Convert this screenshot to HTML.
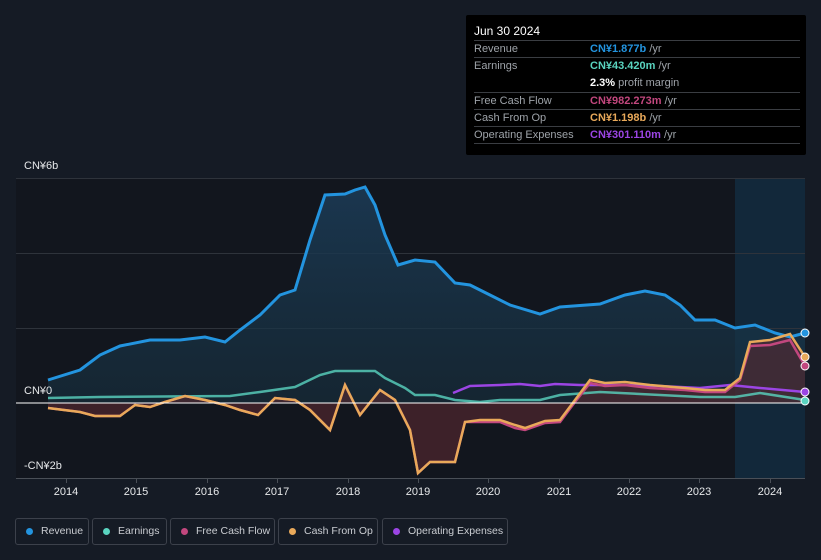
<!DOCTYPE html>
<html><head><meta charset="utf-8"><style>
html,body{margin:0;width:821px;height:560px;overflow:hidden}
body{background:#151b25;font-family:"Liberation Sans","Noto Sans CJK SC",sans-serif;position:relative;color:#fff}
.tt{position:absolute;left:466px;top:15px;width:340px;height:140px;background:#000;border-radius:2px;font-size:11px}
.tt .h{position:absolute;left:8px;top:9px;font-size:12px;color:#fff}
.row{position:absolute;left:8px;width:326px;border-top:1px solid #3a3d42;height:17px;line-height:17px}
.row .l{position:absolute;left:0;color:#9ea3a9;white-space:nowrap}
.row .v{position:absolute;left:116px;color:#9ea3a9;white-space:nowrap}
.lab{position:absolute;font-size:11px;color:#e6e8ea}
.leg{position:absolute;top:518px;height:27px;border:1px solid #3c414b;border-radius:3px;font-size:10.5px;color:#c9ccd1;line-height:25px;box-sizing:border-box;white-space:nowrap;overflow:hidden}
.leg i{position:absolute;left:10px;top:9px;width:7px;height:7px;border-radius:50%}
.leg span{position:absolute;left:25px}
</style></head><body>
<svg width="821" height="560" style="position:absolute;left:0;top:0">
<defs>
<linearGradient id="rg" x1="0" y1="0" x2="0" y2="1"><stop offset="0" stop-color="#1b3a55" stop-opacity=".9"/><stop offset="1" stop-color="#17303f" stop-opacity=".6"/></linearGradient>
</defs>
<rect x="16" y="178" width="789" height="300" fill="#12161e"/>
<rect x="735" y="178" width="70" height="300" fill="#12283a"/>
<g stroke="#2e333b" stroke-width="1"><line x1="16" y1="178.5" x2="805" y2="178.5"/><line x1="16" y1="253.5" x2="805" y2="253.5"/><line x1="16" y1="328.5" x2="805" y2="328.5"/><line x1="16" y1="478.5" x2="805" y2="478.5" stroke="#4a4f57"/></g>
<g stroke="#4a4f57"><line x1="66.5" y1="478" x2="66.5" y2="483"/><line x1="136.5" y1="478" x2="136.5" y2="483"/><line x1="207.5" y1="478" x2="207.5" y2="483"/><line x1="277.5" y1="478" x2="277.5" y2="483"/><line x1="348.5" y1="478" x2="348.5" y2="483"/><line x1="418.5" y1="478" x2="418.5" y2="483"/><line x1="488.5" y1="478" x2="488.5" y2="483"/><line x1="559.5" y1="478" x2="559.5" y2="483"/><line x1="629.5" y1="478" x2="629.5" y2="483"/><line x1="699.5" y1="478" x2="699.5" y2="483"/><line x1="770.5" y1="478" x2="770.5" y2="483"/></g>
<path d="M48,380 L80,370 100,355 120,346 150,340 180,340 205,337 225,342 240,330 260,315 280,295 295,290 310,240 325,195 345,194 355,190 365,187 375,205 385,235 398,265 415,260 435,262 455,283 470,285 490,295 510,305 540,314 560,307 600,304 625,295 645,291 665,295 680,305 695,320 715,320 735,328 755,325 775,333 790,337 805,333 L805,403 L48,403Z" fill="url(#rg)"/>
<path d="M48,408 L80,412 95,416 120,416 135,405 150,407 165,402 185,396 205,400 225,405 240,410 258,415 275,398 295,400 310,410 330,430 345,385 360,415 380,390 395,400 410,430 418,473 430,462 455,462 465,422 480,420 500,420 515,425 525,428 545,421 560,420 575,400 590,380 605,383 625,382 650,385 685,388 705,390 725,390 740,378 750,342 770,340 790,334 805,357 L805,403 L48,403Z" fill="#5a2a30" fill-opacity=".6"/>
<path d="M48,398 L100,397 230,396 260,392 295,387 320,375 335,371 375,371 385,378 405,388 415,395 435,395 455,400 480,402 500,400 540,400 560,395 600,392 640,394 700,397 735,397 760,393 805,400" fill="none" stroke="#5ad4c0" stroke-width="2.5" stroke-opacity=".8"/>
<path d="M48,380 L80,370 100,355 120,346 150,340 180,340 205,337 225,342 240,330 260,315 280,295 295,290 310,240 325,195 345,194 355,190 365,187 375,205 385,235 398,265 415,260 435,262 455,283 470,285 490,295 510,305 540,314 560,307 600,304 625,295 645,291 665,295 680,305 695,320 715,320 735,328 755,325 775,333 790,337 805,333" fill="none" stroke="#2394df" stroke-width="3"/>
<path d="M453,393 L470,386 500,385 520,384 540,386 555,384 580,385 620,385 660,386 700,388 730,385 760,388 805,392" fill="none" stroke="#9b45e4" stroke-width="2.5"/>
<path d="M48,408 L80,412 95,416 120,416 135,405 150,407 165,402 185,396 205,400 225,405 240,410 258,415 275,398 295,400 310,410 330,430 345,385 360,415 380,390 395,400 410,430 418,473 430,462 455,462 465,422 480,422 500,422 515,428 525,430 545,423 560,422 575,402 590,383 605,386 625,385 650,388 685,390 705,392 725,392 740,380 750,346 770,345 790,340 805,366" fill="none" stroke="#c2477e" stroke-width="2.5"/>
<path d="M48,408 L80,412 95,416 120,416 135,405 150,407 165,402 185,396 205,400 225,405 240,410 258,415 275,398 295,400 310,410 330,430 345,385 360,415 380,390 395,400 410,430 418,473 430,462 455,462 465,422 480,420 500,420 515,425 525,428 545,421 560,420 575,400 590,380 605,383 625,382 650,385 685,388 705,390 725,390 740,378 750,342 770,340 790,334 805,357" fill="none" stroke="#e9a95a" stroke-width="2.5"/>
<line x1="16" y1="403" x2="805" y2="403" stroke="#fff" stroke-width="1"/>
<g stroke="#fff" stroke-width="1"><circle cx="805" cy="333" r="4" fill="#2394df"/><circle cx="805" cy="357" r="4" fill="#e9a95a"/><circle cx="805" cy="366" r="4" fill="#c2477e"/><circle cx="805" cy="392" r="4" fill="#9b45e4"/><circle cx="805" cy="401" r="4" fill="#5ad4c0"/></g>
<g font-size="11" fill="#e6e8ea" font-family="Liberation Sans,sans-serif" text-anchor="middle"><text x="66" y="495">2014</text><text x="136" y="495">2015</text><text x="207" y="495">2016</text><text x="277" y="495">2017</text><text x="348" y="495">2018</text><text x="418" y="495">2019</text><text x="488" y="495">2020</text><text x="559" y="495">2021</text><text x="629" y="495">2022</text><text x="699" y="495">2023</text><text x="770" y="495">2024</text></g>
</svg>
<div class="lab" style="left:24px;top:160px">CN¥6b</div>
<div class="lab" style="left:24px;top:385px">CN¥0</div>
<div class="lab" style="left:24px;top:460px">-CN¥2b</div>
<div class="tt">
<div class="h">Jun 30 2024</div>
<div class="row" style="top:25px"><span class="l">Revenue</span><span class="v"><b style="color:#2394df">CN¥1.877b</b> /yr</span></div>
<div class="row" style="top:42px;height:34px"><span class="l">Earnings</span><span class="v"><b style="color:#5ad4c0">CN¥43.420m</b> /yr</span><span class="v" style="top:17px"><b style="color:#fff">2.3%</b> profit margin</span></div>
<div class="row" style="top:77px"><span class="l">Free Cash Flow</span><span class="v"><b style="color:#c2477e">CN¥982.273m</b> /yr</span></div>
<div class="row" style="top:94px"><span class="l">Cash From Op</span><span class="v"><b style="color:#e9a95a">CN¥1.198b</b> /yr</span></div>
<div class="row" style="top:111px"><span class="l">Operating Expenses</span><span class="v"><b style="color:#9b45e4">CN¥301.110m</b> /yr</span></div>
<div class="row" style="top:128px;height:0"></div>
</div>
<div class="leg" style="left:15px;width:74px"><i style="background:#2394df"></i><span>Revenue</span></div>
<div class="leg" style="left:92px;width:75px"><i style="background:#5ad4c0"></i><span>Earnings</span></div>
<div class="leg" style="left:170px;width:105px"><i style="background:#c2477e"></i><span>Free Cash Flow</span></div>
<div class="leg" style="left:278px;width:100px"><i style="background:#e9a95a"></i><span>Cash From Op</span></div>
<div class="leg" style="left:382px;width:126px"><i style="background:#9b45e4"></i><span>Operating Expenses</span></div>
</body></html>
